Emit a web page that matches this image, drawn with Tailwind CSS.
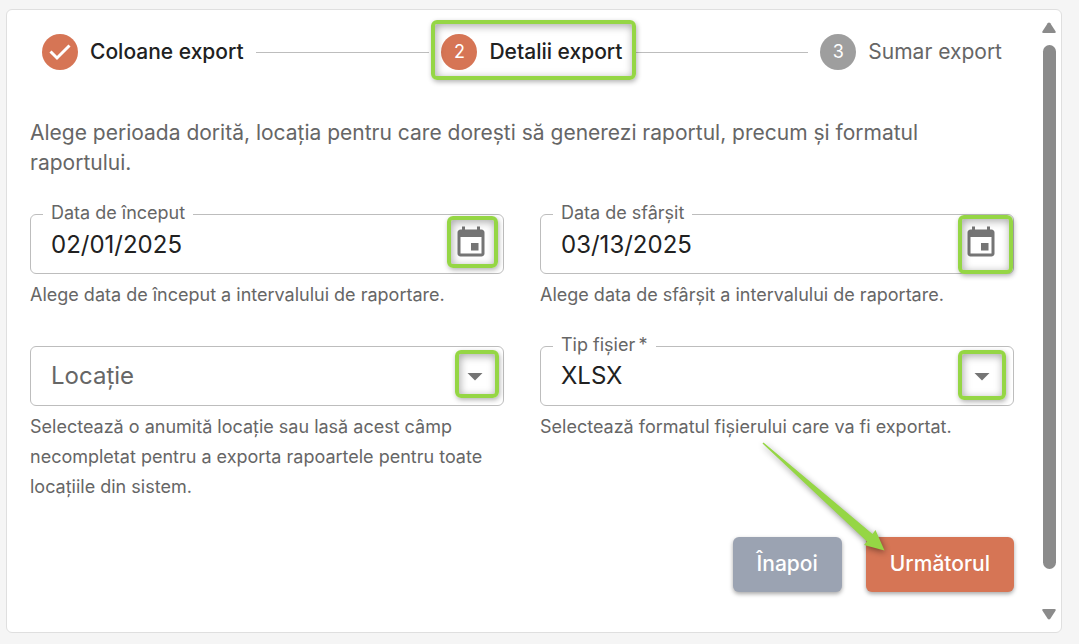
<!DOCTYPE html>
<html lang="ro">
<head>
  <meta charset="UTF-8">
  <meta name="viewport" content="width=device-width, initial-scale=1">
  <title>Detalii export</title>
  <script src="https://cdn.jsdelivr.net/npm/@tailwindcss/browser@4"></script>
</head>
<body class="bg-[#f5f5f5] min-h-screen font-['Inter',sans-serif] text-[#666666] pt-[9px] pb-3 pl-[6px] pr-[17px]">

  <div class="flex bg-white border border-[#dfdfdf] rounded-md">
    <main class="relative flex-1 min-w-0 pt-[23px] pb-10 pl-[23px] pr-[25px]">

      <!-- Stepper -->
      <ol class="flex items-center gap-3 px-3 pt-px text-[21px] leading-9">
        <li class="flex items-center gap-3 font-medium text-[#212121]">
          <svg class="size-9" viewBox="0 0 36 36">
            <circle cx="18" cy="18" r="18" fill="#d67555"/>
            <path d="M8.500 17.500l6.500 6.500L27.500 11.500" fill="none" stroke="#fff" stroke-width="3"/>
          </svg>
          Coloane export
        </li>
        <li class="flex-1 h-px bg-[#bdbdbd]" aria-hidden="true"></li>
        <li class="relative flex items-center gap-3 font-medium text-[#212121]" aria-current="step">
          <span class="absolute -inset-x-[10px] -top-[14px] -bottom-[10px] bg-white"></span>
          <span class="relative size-9 rounded-full bg-[#d67555] text-white text-lg leading-9 text-center font-normal">2</span>
          <span class="relative">Detalii export</span>
          <span class="absolute -left-[10px] -right-[14px] -top-[14px] -bottom-[10px] border-4 border-[#95d645] rounded-md shadow-[1px_2px_5px_rgba(0,0,0,0.3),inset_1px_2px_8px_rgba(0,0,0,0.35)]"></span>
        </li>
        <li class="flex-1 h-px bg-[#bdbdbd]" aria-hidden="true"></li>
        <li class="flex items-center gap-3">
          <span class="size-9 rounded-full bg-[#9e9e9e] text-white text-lg leading-9 text-center">3</span>
          Sumar export
        </li>
      </ol>

      <p class="mt-12 text-[21px] leading-[30px]">Alege perioada dorită, locația pentru care dorești să generezi raportul, precum și formatul raportului.</p>

      <form class="mt-9">
        <div class="grid grid-cols-2 gap-9">
          <div>
            <div class="relative h-[60px]">
              <input id="start" type="text" value="02/01/2025" class="size-full border border-[#bdbdbd] rounded-md pl-5 pr-16 text-2xl text-[#212121]">
              <label for="start" class="absolute left-[13px] -top-[13px] px-2 bg-white text-lg leading-6">Data de început</label>
              <button type="button" aria-label="Alege data de început" class="absolute right-[15px] top-[11px] text-[#757575]">
                <svg class="size-9" viewBox="0 0 24 24" fill="currentColor"><path d="M17 12h-5v5h5v-5zM16 1v2H8V1H6v2H5c-1.11 0-1.99.9-1.99 2L3 19c0 1.1.89 2 2 2h14c1.1 0 2-.9 2-2V5c0-1.1-.9-2-2-2h-1V1h-2zm3 18H5V8h14v11z"/></svg>
              </button>
              <span class="absolute right-[6px] top-[2px] w-[51px] h-[52px] border-4 border-[#95d645] rounded-md pointer-events-none shadow-[1px_2px_5px_rgba(0,0,0,0.3),inset_1px_2px_8px_rgba(0,0,0,0.35)]"></span>
            </div>
            <p class="mt-[6px] text-lg leading-[30px]">Alege data de început a intervalului de raportare.</p>
          </div>

          <div>
            <div class="relative h-[60px]">
              <input id="end" type="text" value="03/13/2025" class="size-full border border-[#bdbdbd] rounded-md pl-5 pr-16 text-2xl text-[#212121]">
              <label for="end" class="absolute left-[13px] -top-[13px] px-2 bg-white text-lg leading-6">Data de sfârșit</label>
              <button type="button" aria-label="Alege data de sfârșit" class="absolute right-[15px] top-[11px] text-[#757575]">
                <svg class="size-9" viewBox="0 0 24 24" fill="currentColor"><path d="M17 12h-5v5h5v-5zM16 1v2H8V1H6v2H5c-1.11 0-1.99.9-1.99 2L3 19c0 1.1.89 2 2 2h14c1.1 0 2-.9 2-2V5c0-1.1-.9-2-2-2h-1V1h-2zm3 18H5V8h14v11z"/></svg>
              </button>
              <span class="absolute right-px top-px w-[55px] h-[59px] border-4 border-[#95d645] rounded-md pointer-events-none shadow-[1px_2px_5px_rgba(0,0,0,0.3),inset_1px_2px_8px_rgba(0,0,0,0.35)]"></span>
            </div>
            <p class="mt-[6px] text-lg leading-[30px]">Alege data de sfârșit a intervalului de raportare.</p>
          </div>

          <div>
            <div class="relative h-[60px]">
              <select id="location" aria-label="Locație" class="size-full appearance-none border border-[#bdbdbd] rounded-md pl-5 pr-16 text-2xl text-[#666666]">
                <option>Locație</option>
              </select>
              <svg class="absolute right-[11px] top-3 size-9 text-[#757575] pointer-events-none" viewBox="0 0 24 24" fill="currentColor"><path d="M7 10l5 5 5-5z"/></svg>
              <span class="absolute right-[5px] top-1 w-11 h-12 border-4 border-[#95d645] rounded-md pointer-events-none shadow-[1px_2px_5px_rgba(0,0,0,0.3),inset_1px_2px_8px_rgba(0,0,0,0.35)]"></span>
            </div>
            <p class="mt-[6px] text-lg leading-[30px]">Selectează o anumită locație sau lasă acest câmp necompletat pentru a exporta rapoartele pentru toate locațiile din sistem.</p>
          </div>

          <div>
            <div class="relative h-[60px]">
              <select id="type" required class="size-full appearance-none border border-[#bdbdbd] rounded-md pl-5 pr-16 text-2xl text-[#212121]">
                <option>XLSX</option>
              </select>
              <label for="type" class="absolute left-[13px] -top-[13px] px-2 bg-white text-lg leading-6">Tip fișier&thinsp;*</label>
              <svg class="absolute right-[14px] top-3 size-9 text-[#757575] pointer-events-none" viewBox="0 0 24 24" fill="currentColor"><path d="M7 10l5 5 5-5z"/></svg>
              <span class="absolute right-2 top-1 w-12 h-[50px] border-4 border-[#95d645] rounded-md pointer-events-none shadow-[1px_2px_5px_rgba(0,0,0,0.3),inset_1px_2px_8px_rgba(0,0,0,0.35)]"></span>
            </div>
            <p class="mt-[6px] text-lg leading-[30px]">Selectează formatul fișierului care va fi exportat.</p>
          </div>
        </div>

        <!-- Actions -->
        <div class="relative mt-[35px] flex justify-end gap-6 text-[21px] leading-[31px] font-medium text-white">
          <button type="button" class="px-6 pt-[11px] pb-[13px] rounded-md bg-[#9ba3b2] shadow-[0_2px_4px_rgba(0,0,0,0.35)]">Înapoi</button>
          <button type="submit" class="px-6 pt-[11px] pb-[13px] rounded-md bg-[#d67555] shadow-[0_2px_4px_rgba(0,0,0,0.35)]">Următorul</button>
          <svg class="absolute right-[120px] bottom-[32px] w-[140px] h-[120px] pointer-events-none drop-shadow-[1px_2px_3px_rgba(0,0,0,0.45)]" viewBox="0 0 140 120">
            <path d="M9.500 2.500L118.500 94l3-4L130.500 110.500 110 105l3-3.500L8.500 3.500z" fill="#95d645"/>
          </svg>
        </div>
      </form>
    </main>

    <!-- Scroll track -->
    <div class="flex flex-col items-center w-5 mr-[2px] py-3 gap-[11px] text-[#8b8b8b]" aria-hidden="true">
      <svg class="w-4 h-3" viewBox="0 0 14 12" fill="currentColor"><path d="M5.700 1.200q1.300-1.600 2.600 0l5.200 8q.9 1.800-1 1.800h-11q-1.900 0-1-1.800z"/></svg>
      <div class="w-[13px] flex-1 rounded-full bg-[#8b8b8b]"></div>
      <svg class="w-4 h-3 mt-7" viewBox="0 0 14 12" fill="currentColor"><path d="M5.700 10.800q1.300 1.600 2.600 0l5.200-8q.9-1.800-1-1.800h-11q-1.900 0-1 1.800z"/></svg>
    </div>
  </div>

</body>
</html>
